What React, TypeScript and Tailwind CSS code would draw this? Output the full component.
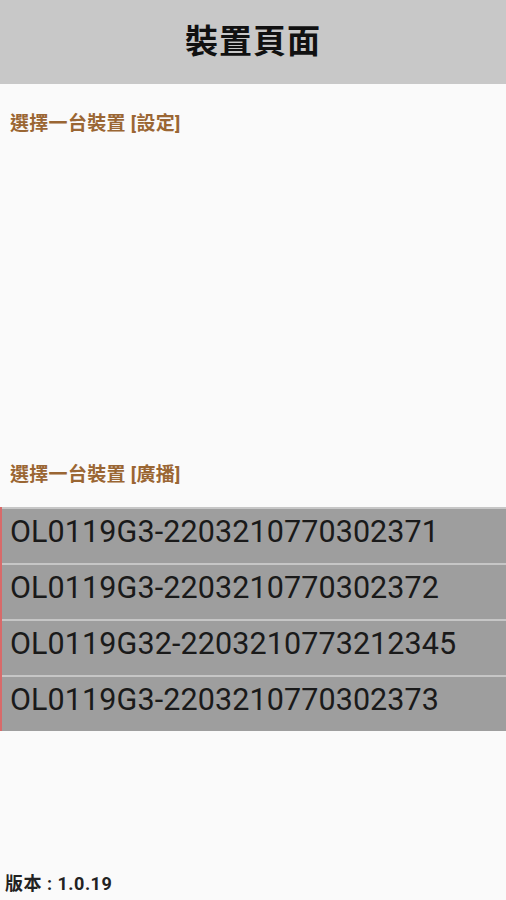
import React from "react";

const broadcastDevices: string[] = [
  "OL0119G3-2203210770302371",
  "OL0119G3-2203210770302372",
  "OL0119G32-2203210773212345",
  "OL0119G3-2203210770302373",
];

const font = "font-['Roboto','Noto_Sans_CJK_TC',sans-serif]";

const App: React.FC = () => {
  return (
    <div className={`w-[506px] h-[900px] bg-[#fafafa] flex flex-col ${font}`}>
      <header className="h-[84px] bg-[#c8c8c8] flex items-center justify-center">
        <h1 className="text-[33px] font-bold text-[#111] tracking-[1px]">裝置頁面</h1>
      </header>

      <section className="h-[378px] pt-[29px] px-[10px]">
        <p className="text-[19px] font-bold text-[#9a6633] leading-[22px] tracking-[0.3px]">選擇一台裝置 [設定]</p>
      </section>

      <section className="flex flex-col">
        <p className="px-[10px] pt-[2px] text-[19px] font-bold text-[#9a6633] leading-[22px] tracking-[0.3px] h-[45px]">
          選擇一台裝置 [廣播]
        </p>
        <ul className="border-l-2 border-[#d86a6a]">
          {broadcastDevices.map((name) => (
            <li
              key={name}
              className="h-[56px] bg-[#9e9e9e] border-t-2 border-[#c6c6c6] flex items-center pl-[8px] pb-[8px] text-[30.5px] text-[#1a1a1a] tracking-[0.1px]"
            >
              {name}
            </li>
          ))}
        </ul>
      </section>

      <footer className="mt-auto px-[5px] pb-[3px] text-[18px] font-bold text-[#222] tracking-[0.5px]">版本 : 1.0.19</footer>
    </div>
  );
};

export default App;
